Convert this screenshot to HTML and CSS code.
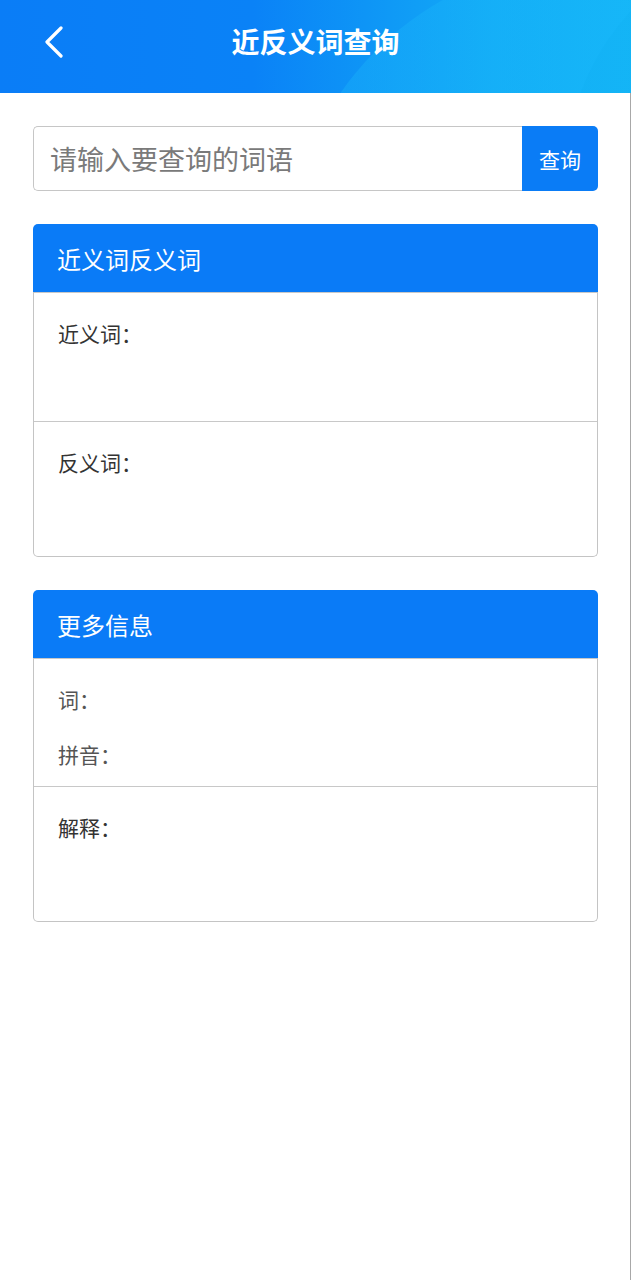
FILE: index.html
```html
<!DOCTYPE html>
<html lang="zh">
<head>
<meta charset="utf-8">
<title>近反义词查询</title>
<link rel="stylesheet" href="styles.css">
</head>
<body>
<header class="topbar">
  <span class="deco deco-a"></span>
  <span class="deco deco-b"></span>
  <a class="back" href="#" aria-label="返回">
    <svg width="22" height="32" viewBox="0 0 22 32"><polyline points="17,2 3,16 17,30" fill="none" stroke="#fff" stroke-width="3.2" stroke-linecap="round" stroke-linejoin="round"/></svg>
  </a>
  <h1 class="title">近反义词查询</h1>
</header>
<main class="page">
  <form class="search">
    <input class="search-input" type="text" placeholder="请输入要查询的词语">
    <button class="search-btn" type="button">查询</button>
  </form>

  <section class="card">
    <div class="card-head">近义词反义词</div>
    <div class="card-body">
      <div class="row row-a"><p class="label">近义词：</p></div>
      <div class="row row-b"><p class="label">反义词：</p></div>
    </div>
  </section>

  <section class="card">
    <div class="card-head">更多信息</div>
    <div class="card-body">
      <div class="row row-c">
        <p class="label muted">词：</p>
        <p class="label muted">拼音：</p>
      </div>
      <div class="row row-b"><p class="label">解释：</p></div>
    </div>
  </section>
</main>
</body>
</html>
```
FILE: styles.css
```css
* { box-sizing: border-box; }
html, body {
  margin: 0;
  padding: 0;
  background: #fff;
  font-family: "Noto Sans CJK SC", "Noto Sans", sans-serif;
}
body { width: 631px; min-height: 1280px; display: flex; flex-direction: column; }

.topbar {
  position: relative;
  overflow: hidden;
  height: 93px;
  display: flex;
  align-items: center;
  justify-content: center;
  padding-bottom: 12px;
  background: linear-gradient(90deg, #0a7df7 0%, #0a82f7 40%, #0e95f6 58%, #13abf6 78%, #15b6f7 100%);
}
.deco {
  position: absolute;
  border-radius: 50%;
  pointer-events: none;
}
.deco-a {
  width: 620px; height: 620px;
  left: 285px; top: -40px;
  background: linear-gradient(90deg, rgba(30, 185, 250, 0.35) 0%, rgba(24, 184, 250, 0.3) 40%, rgba(22, 184, 248, 0.15) 100%);
}
.deco-b {
  width: 500px; height: 500px;
  left: 565px; top: -70px;
  background: rgba(10, 170, 240, 0.1);
}
.back {
  position: absolute;
  left: 44px;
  top: 26px;
  width: 22px;
  height: 32px;
  display: block;
}
.back svg { display: block; }
.title {
  position: relative;
  margin: 0;
  color: #fff;
  font-size: 28px;
  font-weight: 700;
  line-height: 36px;
}

.page {
  flex: 1;
  border-right: 1px solid #a8a8a8;
  padding: 33px 32px 40px 33px;
}

.search {
  display: flex;
  height: 65px;
  margin: 0 0 33px;
}
.search-input {
  flex: 1;
  min-width: 0;
  height: 65px;
  border: 1px solid #c6c6c6;
  border-right: none;
  border-radius: 5px 0 0 5px;
  padding: 0 16px;
  font-family: inherit;
  font-size: 27px;
  color: #333;
  outline: none;
}
.search-input::placeholder { color: #7a7a7a; }
.search-btn {
  width: 76px;
  height: 65px;
  border: none;
  border-radius: 0 5px 5px 0;
  background: #0a7cf6;
  color: #fff;
  font-family: inherit;
  font-size: 21px;
  padding: 0;
}

.card { margin-bottom: 33px; }
.card-head {
  height: 68px;
  display: flex;
  align-items: center;
  padding: 0 24px;
  background: #0a7bf7;
  color: #fff;
  font-size: 24px;
  border-radius: 5px 5px 0 0;
}
.card-body {
  border: 1px solid #c4c4c4;
  border-top: none;
  border-radius: 0 0 5px 5px;
}
.row {
  border-top: 1px solid #c8c8c8;
  padding: 25px 24px 0;
}
.row-a { min-height: 129px; }
.row-b { min-height: 135px; }
.row-c { min-height: 128px; display: flex; flex-direction: column; gap: 25px; }
.label {
  margin: 0;
  font-size: 21px;
  line-height: 30px;
  color: #333;
}
.label.muted { color: #555; }
```
